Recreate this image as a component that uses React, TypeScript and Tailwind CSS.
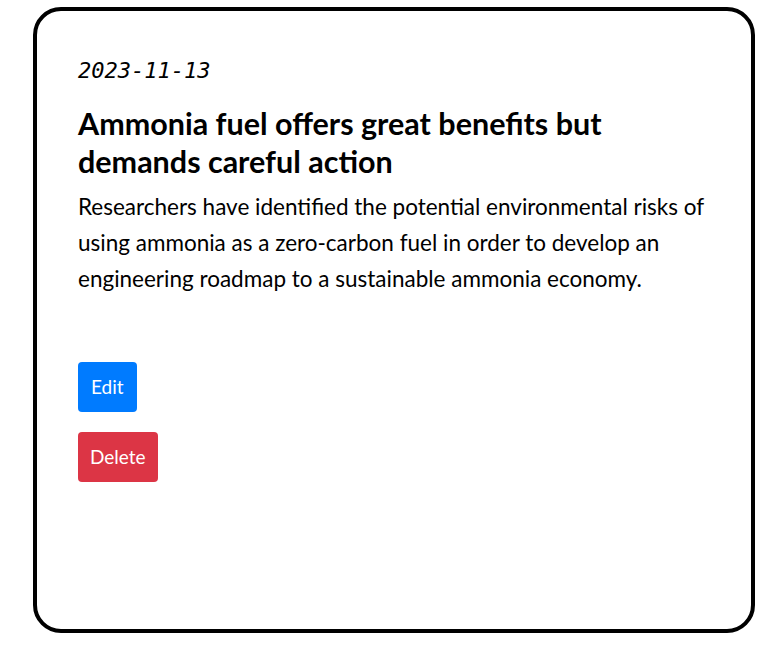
import React from "react";

export default function App() {
  return (
    <div className="w-[768px] h-[651px] bg-white pt-[7px] pl-[33px]" style={{ fontFamily: "Lato, 'Noto Sans', sans-serif" }}>
      <div className="w-[722px] h-[626px] border-4 border-black rounded-[28px] pl-[41px] pt-[43px] text-black">
        <div className="text-[22px] italic leading-[33px]" style={{ fontFamily: "'DejaVu Sans Mono', monospace" }}>2023-11-13</div>
        <h2 className="mt-[17px] text-[30.5px] font-bold leading-[38px] w-[630px]">
          Ammonia fuel offers great benefits but<br />demands careful action
        </h2>
        <p className="mt-[9px] text-[22.5px] leading-[36px]">
          Researchers have identified the potential environmental risks of<br />
          using ammonia as a zero-carbon fuel in order to develop an<br />
          engineering roadmap to a sustainable ammonia economy.
        </p>
        <div className="mt-[65px] flex flex-col items-start gap-[20px]">
          <button className="h-[50px] px-[13px] rounded-[4px] bg-[#007bff] text-white text-[19px]">Edit</button>
          <button className="h-[50px] px-[12px] rounded-[4px] bg-[#dc3545] text-white text-[19px]">Delete</button>
        </div>
      </div>
    </div>
  );
}
